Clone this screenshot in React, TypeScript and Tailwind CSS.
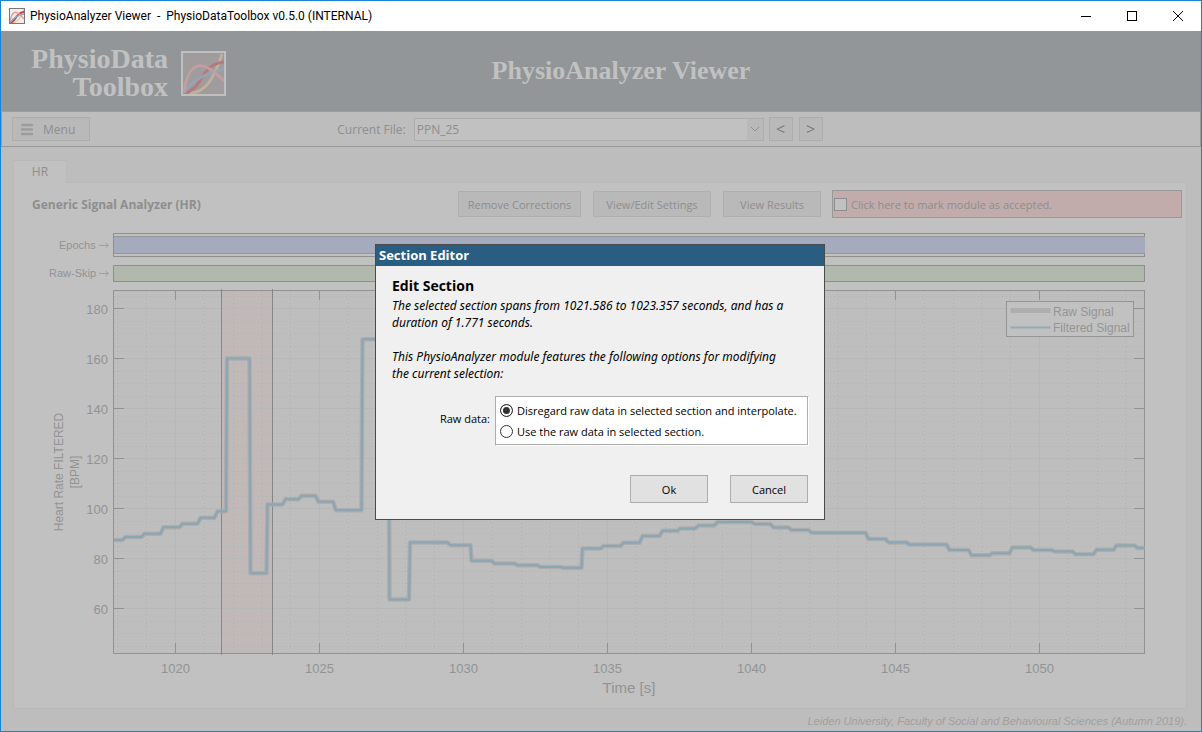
import React from "react";

const MINOR_X = Array.from({ length: 36 }, (_, i) => 1018 + i).filter((v) => v % 5 !== 0);
const MAJOR_X = [1020, 1025, 1030, 1035, 1040, 1045, 1050];
const MAJOR_Y = [180, 160, 140, 120, 100, 80, 60];
const MINOR_Y = Array.from({ length: 29 }, (_, i) => 45 + i * 5).filter((v) => v % 20 !== 0 && v < 190);

const xPos = (t: number) => Math.round(175 + (t - 1020) * 28.8) + 0.5;
const yPos = (v: number) => Math.round(308 + (180 - v) * 2.5) + 0.5;

/* Each step: [x where the level ends, y of the level] */
const STEPS: [number, number][] = [
  [124, 540], [143, 537], [162, 533.7], [181, 527.3], [199, 523.7], [216, 517.7], [226.5, 511.3],
  [250, 358.5], [267, 573.3], [284, 504.5], [300, 499.2], [317, 495.8], [334.5, 501.7], [362, 510.2],
  [389, 339.3], [409.5, 599.5], [449, 542.6], [471, 545.2], [493, 560.7], [516, 563.5], [539, 565.3],
  [562, 567], [582, 567.8], [602, 548.4], [622, 546], [641, 542.8], [661, 536], [679, 530.8],
  [697, 528.4], [716, 525.4], [753, 522], [772, 524], [790, 527.5], [810, 530], [867, 532.7],
  [887, 539], [908, 542.4], [948, 544.4], [970, 550], [991, 555.3], [1011, 553.2], [1032, 547.4],
  [1053, 550], [1074, 551.6], [1095, 554.3], [1115, 549.8], [1136, 545.6], [1144.5, 548],
];

/* Small steps are ramps about 3px wide; tall ones are vertical edges. */
const SIGNAL = STEPS.reduce((d, [end, y], i) => {
  const ramp = (a: number, b: number) => (Math.abs(a - b) > 12 ? 0.5 : 1.5);
  const last = i === STEPS.length - 1;
  const start = i === 0 ? 114 : STEPS[i - 1][0] + ramp(y, STEPS[i - 1][1]);
  const stop = last ? end : end - ramp(y, STEPS[i + 1][1]);
  return `${d}${i === 0 ? "M" : "L"}${start} ${y}L${stop} ${y}`;
}, "");

function LogoMark({ className, frame }: { className: string; frame: string }) {
  return (
    <svg viewBox="0 0 45 45" className={className} aria-hidden="true">
      <rect x="1" y="1" width="43" height="43" fill="#a09b9c" />
      <g fill="none">
        <path d="M9 42C24 42 33 28 41 3" stroke="#c0b29a" strokeWidth="2.8" />
        <path d="M3 42C23 38 19 13 43 11" stroke="#b57b7c" strokeWidth="3" />
        <path d="M3 42C10 30 26 22 43 18" stroke="#96a5b5" strokeWidth="2.6" />
        <path d="M3 41C8 7 23 9 43 30" stroke="#c09fa1" strokeWidth="2.8" />
        <rect x="1" y="1" width="43" height="43" stroke={frame} strokeWidth="2" />
      </g>
    </svg>
  );
}

function TitleIcon() {
  return (
    <svg viewBox="0 0 16 16" className="size-4" aria-hidden="true">
      <rect x="0.5" y="0.5" width="15" height="15" fill="#f4eeee" stroke="#777" />
      <g fill="none">
        <path d="M3 15C9 15 12 8 15 1" stroke="#ecd08c" strokeWidth="1.4" />
        <path d="M1 15C7 14 7 4 15 4" stroke="#d63a3a" strokeWidth="1.8" />
        <path d="M1 15C4 10 9 7 15 6" stroke="#76a9d6" strokeWidth="1.3" />
        <path d="M1 14C3 1 8 2 15 11" stroke="#e59a9c" strokeWidth="1.3" />
        <rect x="0.5" y="0.5" width="15" height="15" stroke="#777" />
      </g>
    </svg>
  );
}

function TitleBar() {
  return (
    <div className="flex h-[30px] items-center bg-white pl-2">
      <TitleIcon />
      <span className="ml-[5px] flex-1 whitespace-pre font-['Roboto','Open_Sans',sans-serif] text-[12px] text-black">
        {"PhysioAnalyzer Viewer  -  PhysioDataToolbox v0.5.0 (INTERNAL)"}
      </span>
      <button aria-label="Minimize" className="flex h-full w-[46px] items-center justify-center">
        <svg viewBox="0 0 10 10" className="size-[10px]"><path d="M0 5.5H10" stroke="#000" /></svg>
      </button>
      <button aria-label="Maximize" className="flex h-full w-[46px] items-center justify-center">
        <svg viewBox="0 0 10 10" className="size-[10px]"><rect x="0.5" y="0.5" width="9" height="9" fill="none" stroke="#000" /></svg>
      </button>
      <button aria-label="Close" className="flex h-full w-[46px] items-center justify-center">
        <svg viewBox="0 0 10 10" className="size-[10px]"><path d="M0 0L10 10M10 0L0 10" stroke="#000" /></svg>
      </button>
    </div>
  );
}

function Banner() {
  return (
    <header className="grid h-[81px] grid-cols-[1fr_auto_1fr] items-center border-b border-[#9a9ea1] bg-[#929698] pl-[27px] font-['Liberation_Serif',serif] font-bold text-[#c1c1c1]">
      <div className="flex items-center gap-3 pt-1">
        <div className="flex w-[141px] flex-col items-end pr-px text-[28px] leading-7">
          <span>PhysioData</span>
          <span>Toolbox</span>
        </div>
        <LogoMark className="size-[45px]" frame="#bfbfbf" />
      </div>
      <h1 className="pl-[13px] text-[26px] leading-8">PhysioAnalyzer Viewer</h1>
    </header>
  );
}

function Toolbar() {
  const arrow = "h-6 w-6 border border-[#adadad] bg-[#b9b9b9] leading-5 text-[16px] text-[#7c7c7c]";
  return (
    <div className="grid h-[35px] grid-cols-[1fr_auto_1fr] items-center border-x border-b border-[#9a9a9a] pl-[10px] text-[12px] text-[#8e8e8e]">
      <button className="flex h-6 w-[78px] items-center gap-[10px] border border-[#adadad] bg-[#b9b9b9] pl-2">
        <svg viewBox="0 0 12 13" className="h-[13px] w-3" aria-hidden="true">
          <path d="M1 2H11M1 6.5H11M1 11H11" stroke="#9c9c9c" strokeWidth="2.4" strokeLinecap="round" />
        </svg>
        <span className="pt-px">Menu</span>
      </button>
      <div className="flex items-center pr-[52px]">
        <label htmlFor="file" className="mr-2 pt-px">Current File:</label>
        <div className="relative flex">
          <select id="file" className="h-[23px] w-[350px] appearance-none border border-[#adadad] bg-[#c1c1c1] pt-px pl-[2px] text-[12px]">
            <option>PPN_25</option>
          </select>
          <span className="pointer-events-none absolute inset-y-px right-px flex w-4 items-center justify-center bg-[#b9b9b9]">
            <svg viewBox="0 0 10 6" className="h-[6px] w-[10px]" aria-hidden="true">
              <path d="M1 1L5 5L9 1" fill="none" stroke="#8e8e8e" />
            </svg>
          </span>
        </div>
        <button aria-label="Previous file" className={`${arrow} ml-[5px]`}>&lt;</button>
        <button aria-label="Next file" className={`${arrow} ml-[6px]`}>&gt;</button>
      </div>
    </div>
  );
}

function SignalChart() {
  return (
    <svg viewBox="14 226 1172 482" className="mt-2 block w-full font-['Liberation_Sans',Arial,sans-serif]" role="img" aria-label="Heart rate signal">
      <g fill="#939393" fontSize="11">
        <text x="59" y="249">Epochs</text>
        <text x="49" y="277">Raw-Skip</text>
        <path d="M99 245.5H108.5M105.5 243L108.5 245.5L105.5 248M99 273.5H108.5M105.5 271L108.5 273.5L105.5 276" fill="none" stroke="#9f9f9f" />
      </g>

      <rect x="113.5" y="233.5" width="1031" height="23" fill="#c1c1c1" stroke="#8f8f8f" />
      <rect x="114" y="236" width="1031" height="18" fill="#a5aabc" />
      <path d="M114 236.5H1145M114 253.5H1145" stroke="#979799" />
      <rect x="113.5" y="265.5" width="1031" height="16" fill="#b0b9ab" stroke="#8f8f8f" />

      <rect x="113.5" y="290.5" width="1031" height="363" fill="#bebebe" />
      <rect x="221" y="290" width="51" height="363" fill="#c0b9b8" />
      <g stroke="#b8b8b8">
        {MAJOR_X.map((t) => <path key={t} d={`M${xPos(t)} 291V653`} />)}
        {MAJOR_Y.map((v) => <path key={v} d={`M114 ${yPos(v)}H1144`} />)}
      </g>
      <g stroke="#b1b1b1" strokeDasharray="1 3">
        {MINOR_X.filter((t) => xPos(t) < 1144).map((t) => <path key={t} d={`M${xPos(t)} 291V653`} />)}
        {MINOR_Y.map((v) => <path key={v} d={`M114 ${yPos(v)}H1144`} />)}
      </g>
      <rect x="113.5" y="290.5" width="1031" height="363" fill="none" stroke="#929292" />
      <g stroke="#929292">
        {MAJOR_X.map((t) => <path key={t} d={`M${xPos(t)} 291V300M${xPos(t)} 643V653`} />)}
        {MAJOR_Y.map((v) => <path key={v} d={`M114 ${yPos(v)}H124M1134 ${yPos(v)}H1144`} />)}
      </g>
      <path d="M221.5 289V655M272.5 289V655" stroke="#868686" />

      <g fill="none" strokeLinejoin="round">
        <path d={SIGNAL} stroke="#a9a9a9" strokeOpacity="0.8" strokeWidth="4.5" />
        <path d={SIGNAL} stroke="#8aa5b5" strokeWidth="2" />
      </g>

      <rect x="1006.5" y="301.5" width="127" height="35" fill="#c1c1c1" stroke="#959595" />
      <path d="M1010.5 310.5H1050.5" stroke="#aeaeae" strokeWidth="5" />
      <path d="M1010.5 327.5H1050.5" stroke="#92a9b6" strokeWidth="2" />
      <g fill="#959595" fontSize="12">
        <text x="1053" y="316">Raw Signal</text>
        <text x="1053" y="332">Filtered Signal</text>
      </g>

      <g fill="#939393" fontSize="13">
        {MAJOR_Y.map((v) => <text key={v} x="108" y={yPos(v) + 5.5} textAnchor="end">{v}</text>)}
        {MAJOR_X.map((t) => <text key={t} x={xPos(t)} y="673" textAnchor="middle">{t}</text>)}
      </g>
      <g fill="#939393" textAnchor="middle">
        <text x="629" y="693" fontSize="15">Time [s]</text>
        <text transform="translate(63 472) rotate(-90)" fontSize="12">Heart Rate FILTERED</text>
        <text transform="translate(79 472) rotate(-90)" fontSize="12">[BPM]</text>
      </g>
    </svg>
  );
}

function ModulePanel() {
  const action = "h-[26px] border border-[#afafaf] bg-[#b9b9b9] pt-[2px]";
  return (
    <main className="flex flex-1 flex-col pt-[13px] pr-[14px] pl-3">
      <div role="tablist" className="relative -mb-px flex">
        <button role="tab" aria-selected="true" className="h-[23px] w-[54px] border border-b-0 border-[#b9b9b9] bg-[#c1c1c1] text-[12px] text-[#8e8e8e]">HR</button>
      </div>
      <section className="border border-[#b9b9b9] bg-[#c1c1c1]">
        <div className="flex items-center pt-[7px] pr-1 pl-[18px] text-[11px] text-[#8e8e8e]">
          <h2 className="flex-1 pt-[2px] text-[12px] font-bold">Generic Signal Analyzer (HR)</h2>
          <button className={`${action} w-[123px]`}>Remove Corrections</button>
          <button className={`${action} ml-3 w-[118px]`}>View/Edit Settings</button>
          <button className={`${action} ml-3 w-[98px]`}>View Results</button>
          <label className="ml-[11px] flex h-7 w-[350px] items-center gap-1 border border-[#999] bg-[#c1abab] pl-px">
            <input type="checkbox" className="size-[13px] appearance-none border border-[#8e8e8e] bg-[#c1c1c1]" />
            <span className="pt-[2px]">Click here to mark module as accepted.</span>
          </label>
        </div>
        <SignalChart />
      </section>
    </main>
  );
}

function SectionEditor() {
  const radio =
    "size-[13px] appearance-none rounded-full border border-[#333] bg-white checked:bg-[#333] checked:shadow-[inset_0_0_0_2px_#fff]";
  const action = "h-7 w-[78px] border border-[#adadad] bg-[#e1e1e1] pt-[2px] text-[11px]";
  return (
    <div role="dialog" aria-labelledby="editor-title" className="w-[450px] border border-[#4a4a4a] bg-[#f0f0f0] text-black">
      <div id="editor-title" className="h-[21px] bg-[#2a5d82] pl-[3px] text-[13px] leading-5 font-bold text-white">Section Editor</div>
      <div className="px-4 pt-[9px] pb-4">
        <h2 className="mb-px text-[14px] leading-[21px] font-bold">Edit Section</h2>
        <div className="font-['Noto_Sans','Open_Sans',sans-serif] text-[12px] leading-[17px] italic">
          <p>The selected section spans from 1021.586 to 1023.357 seconds, and has a<br />duration of 1.771 seconds.</p>
          <p className="mt-[17px]">This PhysioAnalyzer module features the following options for modifying<br />the current selection:</p>
        </div>
        <div role="radiogroup" aria-labelledby="raw-label" className="mt-[14px] flex items-center justify-end gap-[5px] text-[11px]">
          <span id="raw-label" className="pb-[3px]">Raw data:</span>
          <div className="-mr-px border border-[#adadad] border-r-white border-b-white">
            <div className="flex h-12 w-[312px] flex-col justify-center gap-2 border-r border-b border-[#adadad] bg-white pl-1">
              <label className="flex items-center gap-1 leading-[13px]">
                <input type="radio" name="raw" defaultChecked className={radio} />
                Disregard raw data in selected section and interpolate.
              </label>
              <label className="flex items-center gap-1 leading-[13px]">
                <input type="radio" name="raw" className={radio} />
                Use the raw data in selected section.
              </label>
            </div>
          </div>
        </div>
        <div className="mt-[29px] flex justify-end gap-[22px]">
          <button className={action}>Ok</button>
          <button className={action}>Cancel</button>
        </div>
      </div>
    </div>
  );
}

export default function App() {
  return (
    <div className="flex min-h-screen flex-col border border-[#1883d7] bg-[#bdbdbd] font-['Open_Sans','Noto_Sans',sans-serif]">
      <TitleBar />
      <div className="relative flex flex-1 flex-col">
        <Banner />
        <Toolbar />
        <ModulePanel />
        <footer className="flex h-[21px] items-center justify-end pt-[2px] pr-[14px] font-['Liberation_Sans',Arial,sans-serif] text-[11px] text-[#a0a0a0] italic">
          Leiden University, Faculty of Social and Behavioural Sciences (Autumn 2019).
        </footer>
        <div className="absolute inset-0 flex items-center justify-center pt-[2px] pr-[2px]">
          <SectionEditor />
        </div>
      </div>
    </div>
  );
}
